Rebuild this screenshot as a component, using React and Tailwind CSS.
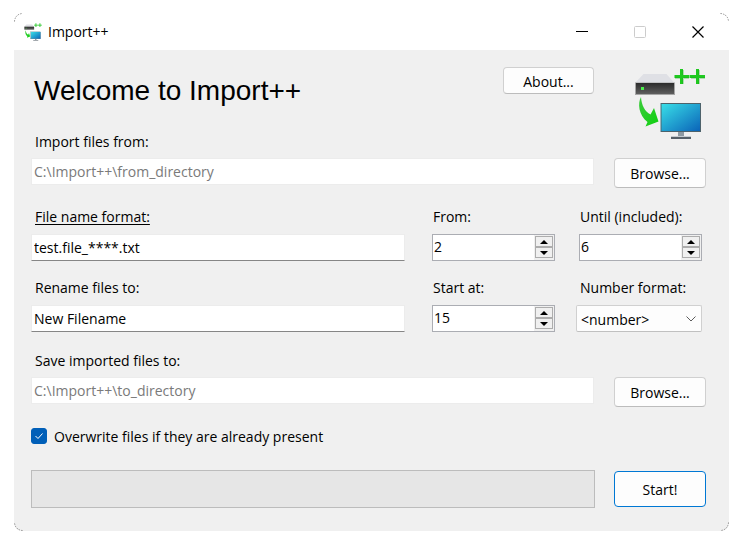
import { useState } from "react";

function Logo({ className }) {
  return (
    <svg className={className} viewBox="0 0 72 70" aria-hidden="true">
      <defs>
        <linearGradient id="screen" x1="0" y1="0" x2="1" y2="1">
          <stop offset="0" stopColor="#39e0e8" />
          <stop offset="1" stopColor="#0a62b8" />
        </linearGradient>
        <linearGradient id="drive" x1="0" y1="0" x2="0" y2="1">
          <stop offset="0" stopColor="#2b2b2b" />
          <stop offset="1" stopColor="#5f5f5f" />
        </linearGradient>
        <linearGradient id="arrow" x1="0" y1="0" x2="1" y2="1">
          <stop offset="0" stopColor="#3ccb3c" />
          <stop offset="1" stopColor="#0fd010" />
        </linearGradient>
      </defs>
      <path d="M9.500 5h23L40.500 14H1z" fill="#dfe0e5" />
      <rect x="1" y="13.500" width="40" height="12.500" fill="#a6a6a6" />
      <rect x="2" y="14" width="38" height="11" fill="url(#drive)" />
      <rect x="7" y="18" width="3" height="3" fill="#4cf04c" />
      <path d="M47.500 0v15M40.500 7.500h15M63.500 0v15M56 7.500h15" stroke="#1fc91f" strokeWidth="3" />
      <path d="M49 1v5M49 9v6M65 1v5M65 9v6M41 9h5M50 9h5M57 9h5M66 9h5" stroke="#17a51c" strokeWidth="0.600" />
      <path d="M7 28C3.500 34 4.500 46 13.500 53L11.500 57.500L24.500 52.500L20 39L16.500 45.500C11 43 7.500 36 7 28Z" fill="url(#arrow)" />
      <rect x="27" y="34.500" width="39.500" height="28" fill="url(#screen)" stroke="#4d626b" />
      <path d="M26.500 34v29" stroke="#9fb1b8" />
      <rect x="44" y="63" width="6" height="4" fill="#8e9aa3" />
      <rect x="37" y="67" width="20" height="1" fill="#c5cbd0" />
      <rect x="37" y="68" width="20" height="2" fill="#566069" />
    </svg>
  );
}

function Corner({ className }) {
  return (
    <svg className={"pointer-events-none absolute size-[9px] " + className} viewBox="0 0 9 9" fill="none" aria-hidden="true">
      <path d="M0.500 8.500A8 8 0 0 1 8.500 0.500" stroke="#888" strokeDasharray="1.500 1" />
    </svg>
  );
}

function Field({ id, label, className = "", inset = "pl-1", underline = false, children }) {
  return (
    <div className={"flex flex-col " + className}>
      <label htmlFor={id} className={"self-start leading-5 whitespace-nowrap " + inset + (underline ? " underline underline-offset-2" : "")}>
        {label}
      </label>
      {children}
    </div>
  );
}

function DirectoryRow({ id, label, value }) {
  return (
    <Field id={id} label={label} className="gap-1.5">
      <div className="flex gap-5">
        <input id={id} readOnly defaultValue={value} className="h-[27px] min-w-0 flex-1 border border-[#ececec] bg-white px-0.5 text-[#7a7a7a] outline-none" />
        <PushButton className="h-[30px] w-[92px]">Browse...</PushButton>
      </div>
    </Field>
  );
}

function PushButton({ className, children }) {
  return (
    <button type="button" className={"shrink-0 rounded-sm border bg-[#fdfdfd] pt-0.5 " + (className.includes("border-") ? className : "border-[#d0d0d0] border-b-[#bcbcbc] " + className)}>
      {children}
    </button>
  );
}

function TextField({ id, value }) {
  return (
    <input id={id} defaultValue={value} className="h-[27px] w-full border border-[#ececec] border-b-[#868686] bg-white px-0.5 outline-none" />
  );
}

function SpinBox({ id, initial }) {
  const [value, setValue] = useState(initial);
  const step = "flex h-[11px] w-[18px] items-center justify-center border border-[#adadad] bg-[#f0f0f0]";
  return (
    <div className="flex h-[27px] border border-[#abadb3] bg-white">
      <input id={id} inputMode="numeric" value={value} onChange={(e) => setValue(Number(e.target.value) || 0)} className="min-w-0 flex-1 px-px pb-0.5 outline-none" />
      <div className="flex flex-col bg-[#f0f0f0] p-px">
        <button type="button" aria-label="Increase" onClick={() => setValue(value + 1)} className={step}>
          <svg width="8" height="4" viewBox="0 0 8 4" aria-hidden="true"><path d="M0 4L4 0L8 4z" /></svg>
        </button>
        <button type="button" aria-label="Decrease" onClick={() => setValue(value - 1)} className={step}>
          <svg width="8" height="4" viewBox="0 0 8 4" aria-hidden="true"><path d="M0 0L4 4L8 0z" /></svg>
        </button>
      </div>
    </div>
  );
}

function TitleBar() {
  const control = "flex h-full w-[58px] items-center justify-center";
  return (
    <header className="flex h-[37px] items-center bg-white pr-0.5 pl-2.5">
      <Logo className="size-[18px]" />
      <span className="ml-1.5 flex-1">Import++</span>
      <button type="button" aria-label="Minimize" className={control}>
        <svg width="12" height="12" viewBox="0 0 12 12" aria-hidden="true"><path d="M0 5.500h12" stroke="#000" /></svg>
      </button>
      <button type="button" aria-label="Maximize" disabled className={control}>
        <svg width="12" height="12" viewBox="0 0 12 12" fill="none" aria-hidden="true"><rect x="0.500" y="0.500" width="11" height="11" rx="1" stroke="#ccc" /></svg>
      </button>
      <button type="button" aria-label="Close" className={control}>
        <svg width="12" height="12" viewBox="0 0 12 12" aria-hidden="true"><path d="M0.500 0.500l11 11M11.500 0.500l-11 11" stroke="#000" strokeWidth="1.200" /></svg>
      </button>
    </header>
  );
}

export default function App() {
  return (
    <div className="min-h-screen bg-white pt-[13px] pr-[11px] pb-3 pl-3.5 font-['Open_Sans','Noto_Sans',sans-serif] text-sm text-black">
      <div className="relative overflow-hidden rounded-lg">
        <TitleBar />
        <main className="flex flex-col bg-[#f0f0f0] pt-[17px] pr-[23px] pb-[23px] pl-[17px]">
          <div className="flex h-[65px] items-start">
            <h1 className="flex-1 pt-1.5 pl-[3px] font-['Liberation_Sans',sans-serif] text-[28px] leading-9 whitespace-nowrap">Welcome to Import++</h1>
            <PushButton className="h-[27px] w-[91px]">About...</PushButton>
            <Logo className="mt-0.5 ml-10 h-[70px] w-[72px]" />
          </div>

          <DirectoryRow id="source" label="Import files from:" value="C:\Import++\from_directory" />

          <div className="mt-[19px] flex pr-1">
            <Field id="format" label="File name format:" underline className="min-w-0 flex-1 gap-[7px]">
              <TextField id="format" value="test.file_****.txt" />
            </Field>
            <Field id="first" label="From:" inset="pl-px" className="ml-[27px] w-[123px] gap-[7px]">
              <SpinBox id="first" initial={2} />
            </Field>
            <Field id="last" label="Until (included):" inset="pl-px" className="ml-6 w-[123px] gap-[7px]">
              <SpinBox id="last" initial={6} />
            </Field>
          </div>

          <div className="mt-[17px] flex pr-1">
            <Field id="rename" label="Rename files to:" className="min-w-0 flex-1 gap-[7px]">
              <TextField id="rename" value="New Filename" />
            </Field>
            <Field id="start" label="Start at:" inset="pl-px" className="ml-[27px] w-[123px] gap-[7px]">
              <SpinBox id="start" initial={15} />
            </Field>
            <Field id="number" label="Number format:" className="ml-[21px] w-[126px] gap-[7px]">
              <div className="grid items-center">
                <select id="number" className="col-start-1 row-start-1 h-[27px] w-full appearance-none rounded-xs border border-[#d0d0d0] border-b-[#c0c0c0] bg-[#fdfdfd] px-1 pt-0.5 outline-none">
                  <option>&lt;number&gt;</option>
                </select>
                <svg className="pointer-events-none col-start-1 row-start-1 mr-1.5 justify-self-end" width="10" height="6" viewBox="0 0 10 6" fill="none" aria-hidden="true">
                  <path d="M0.500 0.500L5 5L9.500 0.500" stroke="#5c5c5c" />
                </svg>
              </div>
            </Field>
          </div>

          <div className="mt-[19px]">
            <DirectoryRow id="target" label="Save imported files to:" value="C:\Import++\to_directory" />
          </div>

          <div className="mt-[19px] flex h-5 items-center gap-[7px]">
            <span className="grid size-4 place-items-center">
              <input id="overwrite" type="checkbox" defaultChecked className="peer col-start-1 row-start-1 size-4 appearance-none rounded-[3px] border border-[#005fb8] checked:bg-[#005fb8]" />
              <svg className="pointer-events-none invisible col-start-1 row-start-1 peer-checked:visible" width="8" height="6" viewBox="0 0 8 6" fill="none" aria-hidden="true">
                <path d="M0.500 3L3 5.500L7.500 0.500" stroke="#fff" />
              </svg>
            </span>
            <label htmlFor="overwrite" className="pt-0.5">Overwrite files if they are already present</label>
          </div>

          <div className="mt-6 flex items-center gap-[19px]">
            <div role="progressbar" aria-label="Import progress" aria-valuenow={0} className="h-[38px] flex-1 border border-[#bcbcbc] bg-[#e6e6e6]" />
            <PushButton className="h-9 w-[92px] border-[#0078d4]">Start!</PushButton>
          </div>
        </main>
        <Corner className="top-0 left-0" />
        <Corner className="top-0 right-0 rotate-90" />
        <Corner className="right-0 bottom-0 rotate-180" />
        <Corner className="bottom-0 left-0 -rotate-90" />
      </div>
    </div>
  );
}
